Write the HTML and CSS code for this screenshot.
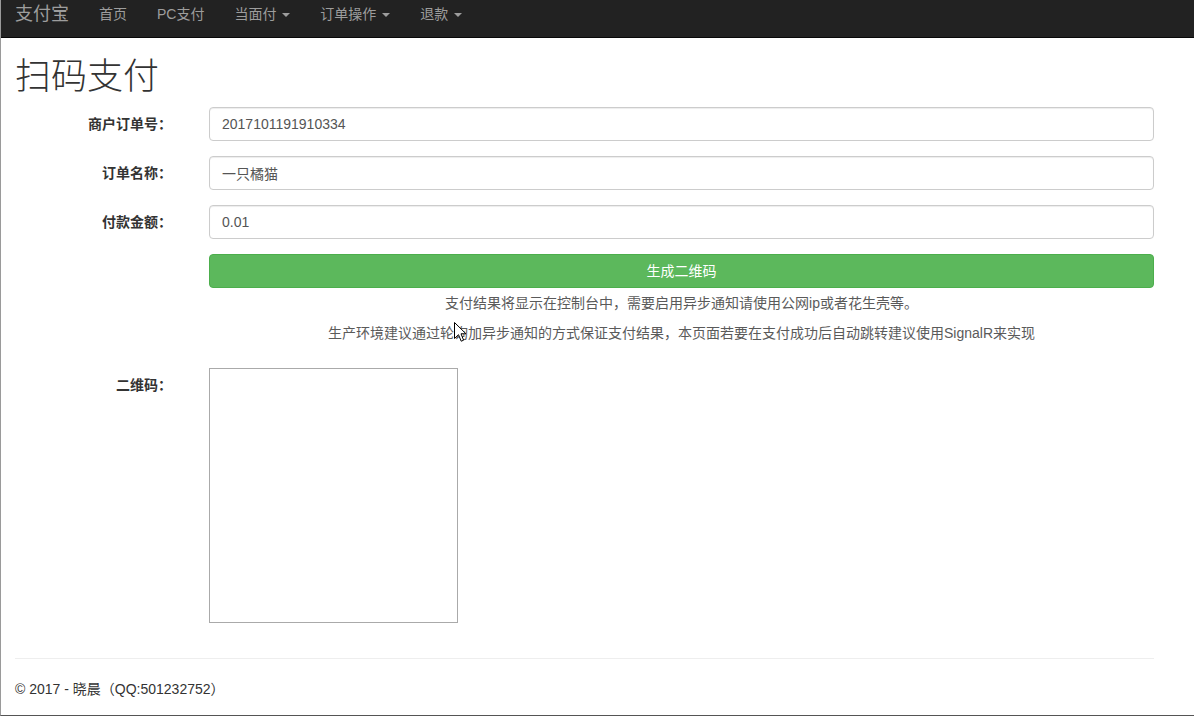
FILE: index.html
```html
<!DOCTYPE html>
<html lang="zh-CN">
<head>
<meta charset="utf-8">
<title>扫码支付</title>
<link rel="stylesheet" href="styles.css">
</head>
<body>
<div class="screen">
  <nav class="navbar">
    <a class="brand">支付宝</a>
    <ul class="nav">
      <li><a>首页</a></li>
      <li><a>PC支付</a></li>
      <li><a>当面付 <span class="caret"></span></a></li>
      <li><a>订单操作 <span class="caret"></span></a></li>
      <li><a>退款 <span class="caret"></span></a></li>
    </ul>
  </nav>
  <main class="page">
    <h2 class="title">扫码支付</h2>
    <form class="form">
      <div class="row">
        <label class="label">商户订单号：</label>
        <div class="control"><input class="input" type="text" value="2017101191910334"></div>
      </div>
      <div class="row">
        <label class="label">订单名称：</label>
        <div class="control"><input class="input" type="text" value="一只橘猫"></div>
      </div>
      <div class="row">
        <label class="label">付款金额：</label>
        <div class="control"><input class="input" type="text" value="0.01"></div>
      </div>
      <div class="row">
        <div></div>
        <div class="control">
          <button type="button" class="btn">生成二维码</button>
          <p class="note">支付结果将显示在控制台中，需要启用异步通知请使用公网ip或者花生壳等。</p>
          <p class="note">生产环境建议通过轮询加异步通知的方式保证支付结果，本页面若要在支付成功后自动跳转建议使用SignalR来实现</p>
        </div>
      </div>
      <div class="row">
        <label class="label">二维码：</label>
        <div class="control"><div class="qr"></div></div>
      </div>
    </form>
    <hr class="rule">
    <footer class="footer">
      <p>© 2017 - 晓晨（QQ:501232752）</p>
    </footer>
  </main>
  <svg class="cursor" width="13" height="21" viewBox="0 0 13 21" xmlns="http://www.w3.org/2000/svg">
    <path d="M0.5 0.5 L0.5 16.5 L4.5 12.7 L7.2 19.2 L9.6 18.2 L7 11.8 L12 11.8 Z" fill="#fff" stroke="#000" stroke-width="1" stroke-linejoin="miter"/>
  </svg>
</div>
</body>
</html>
```

FILE: styles.css
```css
* { box-sizing: border-box; }

html, body {
  margin: 0;
  padding: 0;
  background: #fff;
}

body {
  font-family: "Liberation Sans", "Noto Sans CJK SC", sans-serif;
  font-size: 14px;
  line-height: 20px;
  color: #333;
}

.screen {
  position: relative;
  width: 1194px;
  height: 716px;
  border-left: 1px solid #9a9a9a;
  border-bottom: 1px solid #555;
  overflow: hidden;
}

.navbar {
  display: flex;
  align-items: flex-start;
  height: 38px;
  background: #222;
  border-bottom: 1px solid #080808;
  padding: 4px 0 0 14px;
}

.brand {
  font-size: 18px;
  line-height: 20px;
  color: #9d9d9d;
  padding-right: 15px;
}

.nav {
  display: flex;
  list-style: none;
  margin: 0;
  padding: 0;
}

.nav a {
  display: block;
  padding: 0 15px;
  color: #9d9d9d;
  line-height: 20px;
}

.caret {
  display: inline-block;
  width: 0;
  height: 0;
  margin-left: 2px;
  vertical-align: middle;
  border-top: 4px solid;
  border-left: 4px solid transparent;
  border-right: 4px solid transparent;
}

.page {
  width: 1168px;
  padding: 0 15px 0 14px;
}

.title {
  font-size: 36px;
  font-weight: 300;
  line-height: 39.6px;
  margin: 19px 0 10px;
  color: #333;
}

.row {
  display: grid;
  grid-template-columns: 165px 1fr;
  column-gap: 29px;
  margin-bottom: 15px;
}

.label {
  text-align: right;
  font-weight: bold;
  padding-top: 7px;
  padding-right: 8px;
}

.input {
  display: block;
  width: 100%;
  height: 34px;
  padding: 6px 12px;
  font: inherit;
  font-size: 14px;
  line-height: 20px;
  color: #555;
  background: #fff;
  border: 1px solid #ccc;
  border-radius: 4px;
  box-shadow: inset 0 1px 1px rgba(0, 0, 0, 0.075);
}

.btn {
  display: block;
  width: 100%;
  height: 34px;
  font: inherit;
  color: #fff;
  background: #5cb85c;
  border: 1px solid #4cae4c;
  border-radius: 4px;
  margin-bottom: 5px;
}

.note {
  margin: 0 0 10px;
  text-align: center;
  color: #5a5a5a;
}

.qr {
  width: 249px;
  height: 255px;
  border: 1px solid #aaa;
}

.rule {
  margin: 35px 0 20px;
  border: 0;
  border-top: 1px solid #eee;
}

.footer p {
  margin: 0;
}

.cursor {
  position: absolute;
  left: 453px;
  top: 322px;
}
```
